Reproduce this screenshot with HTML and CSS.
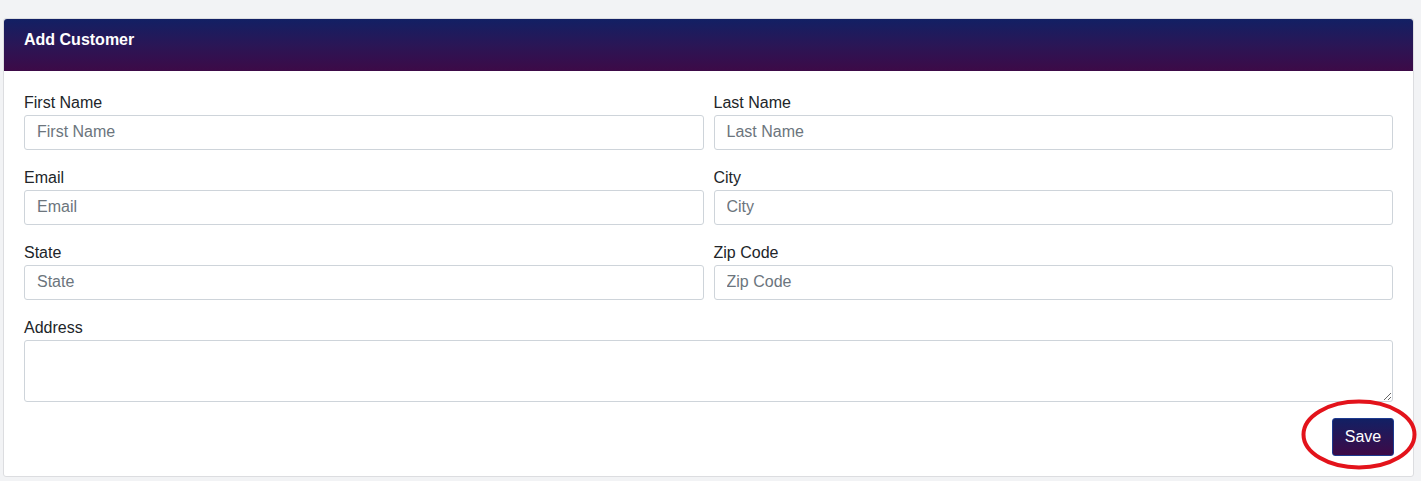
FILE: index.html
```html
<!DOCTYPE html>
<html>
<head>
<meta charset="utf-8">
<link rel="stylesheet" href="styles.css">
</head>
<body>
<div class="card">
  <div class="card-header">Add Customer</div>
  <div class="card-body">
    <div class="grid">
      <div class="field"><label>First Name</label><input type="text" placeholder="First Name"></div>
      <div class="field"><label>Last Name</label><input type="text" placeholder="Last Name"></div>
      <div class="field"><label>Email</label><input type="text" placeholder="Email"></div>
      <div class="field"><label>City</label><input type="text" placeholder="City"></div>
      <div class="field"><label>State</label><input type="text" placeholder="State"></div>
      <div class="field"><label>Zip Code</label><input type="text" placeholder="Zip Code"></div>
      <div class="field full"><label>Address</label><textarea></textarea></div>
    </div>
    <div class="actions">
      <button class="btn">Save</button>
      <svg class="circle" width="118" height="73" viewBox="0 0 118 73"><ellipse cx="59" cy="36.5" rx="55.5" ry="33" fill="none" stroke="#e3131b" stroke-width="4"/></svg>
    </div>
  </div>
</div>
</body>
</html>
```
FILE: styles.css
```css
html, body { margin: 0; padding: 0; }
body {
  background: #f2f3f5;
  font-family: "Liberation Sans", Arial, sans-serif;
  padding: 18px 7px 0 3px;
  height: 481px;
  box-sizing: border-box;
}
.card {
  background: #fff;
  border: 1px solid #dcdde0;
  border-radius: 3px;
}
.card-header {
  height: 52px;
  box-sizing: border-box;
  background: linear-gradient(to bottom, #122064 0%, #2a1656 50%, #3d0a47 100%);
  color: #fff;
  font-weight: bold;
  font-size: 16px;
  line-height: 18px;
  padding: 12px 20px 0 20px;
  border-radius: 3px 3px 0 0;
}
.card-body {
  padding: 23px 20px 20px 20px;
}
.grid {
  display: grid;
  grid-template-columns: 1fr 1fr;
  column-gap: 10px;
  row-gap: 19px;
}
.field { display: flex; flex-direction: column; }
.field.full { grid-column: 1 / 3; }
label {
  font-size: 16px;
  color: #212529;
  line-height: 18px;
  margin-bottom: 3px;
}
input, textarea {
  font-family: "Liberation Sans", Arial, sans-serif;
  font-size: 16px;
  color: #495057;
  border: 1px solid #ced4da;
  border-radius: 3px;
  padding: 0 12px 1px 12px;
  height: 35px;
  box-sizing: border-box;
  background: #fff;
  outline: none;
}
textarea { height: 62px; resize: vertical; }
::placeholder { color: #6c757d; opacity: 1; }
.actions {
  display: flex;
  justify-content: flex-end;
  margin-top: 16px;
  position: relative;
}
.btn {
  font-family: "Liberation Sans", Arial, sans-serif;
  font-size: 16px;
  color: #fff;
  background: linear-gradient(to bottom, #122064 0%, #3d0a47 100%);
  border: 1px solid #1d3a8f;
  border-radius: 3px;
  height: 38px;
  width: 62px;
  padding: 0;
  margin-right: -1px;
}
.circle {
  position: absolute;
  right: -25px;
  top: -20px;
  pointer-events: none;
}
```
